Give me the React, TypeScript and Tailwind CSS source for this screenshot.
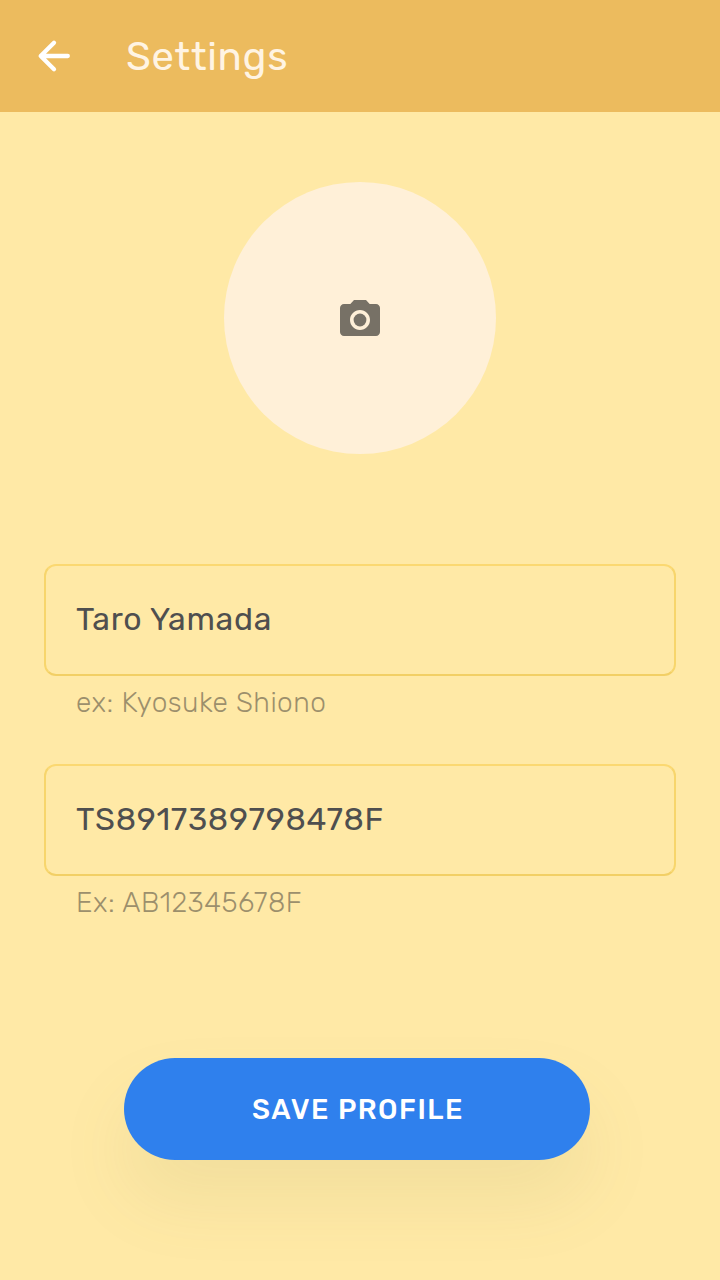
import { MdCameraAlt } from "react-icons/md";

function BackArrow() {
  return (
    <svg
      viewBox="0 0 24 24"
      className="size-12"
      fill="none"
      stroke="currentColor"
      strokeWidth="2.15"
      strokeLinecap="round"
      strokeLinejoin="round"
      aria-hidden="true"
    >
      <path d="M12 5.4 5.35 12 12 18.6M5.4 12H18.9" />
    </svg>
  );
}

function Field({ id, value, hint }: { id: string; value: string; hint: string }) {
  return (
    <div className="h-[200px]">
      <input
        id={id}
        defaultValue={value}
        className="block h-28 w-full rounded-xl border-2 border-[#f7d56c] border-t-[#fbd871] border-b-[#f2cf65] bg-transparent px-[30px] pb-0.5 text-[32px] tracking-[0.7px] text-[#4f4f4f] outline-none"
      />
      <label htmlFor={id} className="block px-8 pt-[7px] text-[28px] leading-10 font-light tracking-[0.5px] text-[#9c8f6c]">
        {hint}
      </label>
    </div>
  );
}

export default function App() {
  return (
    <div className="flex h-[1280px] w-[720px] flex-col overflow-hidden bg-[#ffe9a6] font-['Rubik','Inter',sans-serif]">
      <header className="flex h-28 items-center bg-[#ecbb5e] pl-[30px] text-[#fff4e3]">
        <button className="mr-12 text-white" aria-label="Back">
          <BackArrow />
        </button>
        <h1 className="pt-0.5 text-[40px] tracking-[0.7px]">Settings</h1>
      </header>
      <main className="flex flex-col items-center pt-[70px]">
        <button className="flex size-[272px] items-center justify-center rounded-full bg-[#fff0d8] pt-1" aria-label="Add photo">
          <MdCameraAlt className="size-12 text-[#777166]" />
        </button>
        <form className="mt-[110px] flex w-full flex-col px-11">
          <Field id="name" value="Taro Yamada" hint="ex: Kyosuke Shiono" />
          <Field id="code" value="TS8917389798478F" hint="Ex: AB12345678F" />
          <button type="button" className="mt-[94px] ml-20 h-[102px] w-[466px] rounded-full bg-[#2f80ed] pt-0.5 pl-0.5 text-[28px] font-medium tracking-[1.5px] text-white shadow-[0_40px_70px_rgba(130,140,80,0.1)]">
            SAVE PROFILE
          </button>
        </form>
      </main>
    </div>
  );
}
